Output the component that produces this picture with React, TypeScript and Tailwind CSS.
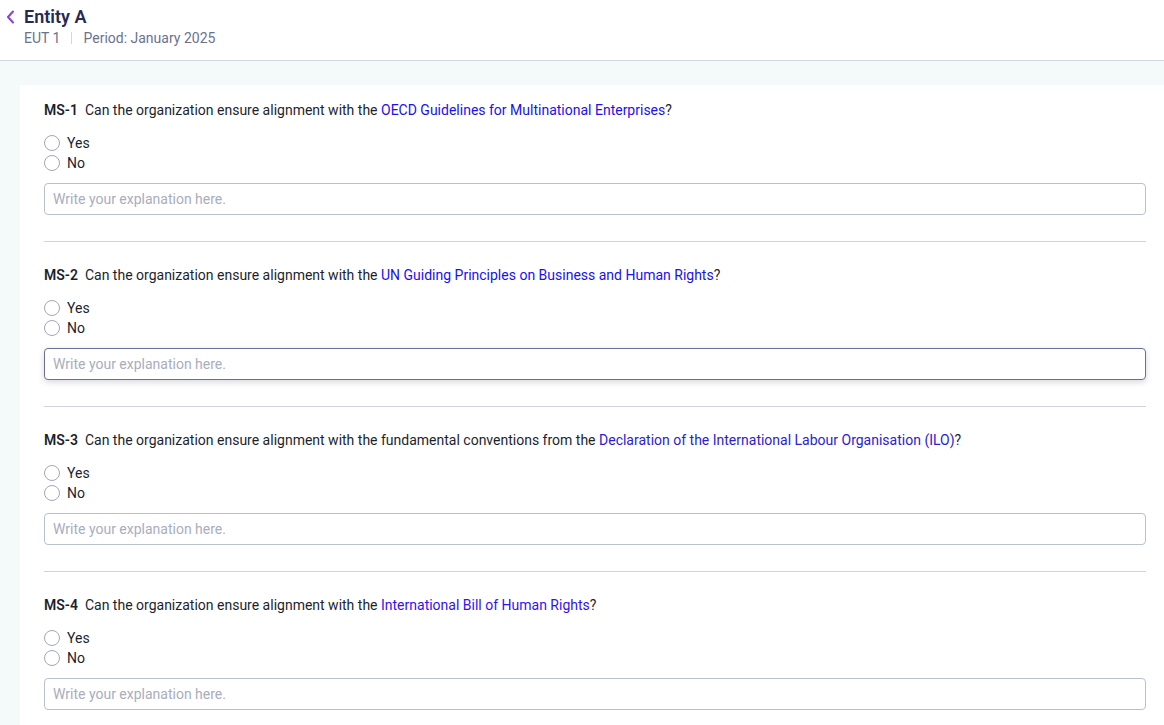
import React from "react";

type Question = {
  code: string;
  pre: string;
  link: string;
  linkColor: string;
  focused?: boolean;
};

const questions: Question[] = [
  {
    code: "MS-1",
    pre: "Can the organization ensure alignment with the ",
    link: "OECD Guidelines for Multinational Enterprises",
    linkColor: "text-[#2010f0]",
  },
  {
    code: "MS-2",
    pre: "Can the organization ensure alignment with the ",
    link: "UN Guiding Principles on Business and Human Rights",
    linkColor: "text-[#2010f0]",
    focused: true,
  },
  {
    code: "MS-3",
    pre: "Can the organization ensure alignment with the fundamental conventions from the ",
    link: "Declaration of the International Labour Organisation (ILO)",
    linkColor: "text-[#2a22d0]",
  },
  {
    code: "MS-4",
    pre: "Can the organization ensure alignment with the ",
    link: "International Bill of Human Rights",
    linkColor: "text-[#3212f0]",
  },
];

function Radio({ label }: { label: string }) {
  return (
    <label className="flex items-center h-5 gap-[7px] text-[14px] text-[#1c1f2e]">
      <span className="w-4 h-4 rounded-full border border-[#a3a8b8] bg-white" />
      {label}
    </label>
  );
}

function QuestionBlock({ q, last }: { q: Question; last: boolean }) {
  return (
    <div className={`pb-[26px] ${last ? "" : "border-b border-[#d4d2dc] mb-[23px]"}`}>
      <p className="text-[14px] leading-5 text-[#1c1f2e]">
        <span className="font-semibold mr-[7px]">{q.code}</span>
        {q.pre}
        <span className={q.linkColor}>{q.link}</span>?
      </p>
      <div className="mt-[13px] flex flex-col">
        <Radio label="Yes" />
        <Radio label="No" />
      </div>
      <div
        className={`mt-[10px] h-8 rounded-[4px] border bg-white flex items-center px-[8px] text-[14px] ${
          q.focused
            ? "border-[#6b6f96] shadow-[0_2px_6px_rgba(30,35,70,0.18)]"
            : "border-[#b8c1cc]"
        }`}
      >
        <span className="text-[#a9adbd]">Write your explanation here.</span>
      </div>
    </div>
  );
}

export default function App() {
  return (
    <div
      className="w-[1164px] h-[725px] overflow-hidden bg-[#f4f9f9]"
      style={{ fontFamily: "Roboto, 'Noto Sans', sans-serif" }}
    >
      <header className="h-[61px] bg-white border-b border-[#d3d6de] flex items-start pt-[5px] pl-[5px]">
        <svg width="12" height="18" viewBox="0 0 12 18" className="mt-[3px]" fill="none">
          <path d="M8 3.5 L3 9 L8 14.5" stroke="#8b3fd9" strokeWidth="2" strokeLinecap="round" strokeLinejoin="round" />
        </svg>
        <div className="ml-[7px]">
          <h1 className="text-[18px] leading-[24px] font-semibold text-[#262a55]">Entity A</h1>
          <div className="flex items-center text-[14px] leading-[18px] text-[#6b7290]">
            <span>EUT 1</span>
            <span className="mx-[11px] w-px h-[12px] bg-[#d3d6de]" />
            <span>Period: January 2025</span>
          </div>
        </div>
      </header>
      <main className="pl-5 pt-6">
        <div className="bg-white pl-6 pr-[18px] pt-[15px]">
          {questions.map((q, i) => (
            <QuestionBlock key={q.code} q={q} last={i === questions.length - 1} />
          ))}
        </div>
      </main>
    </div>
  );
}
